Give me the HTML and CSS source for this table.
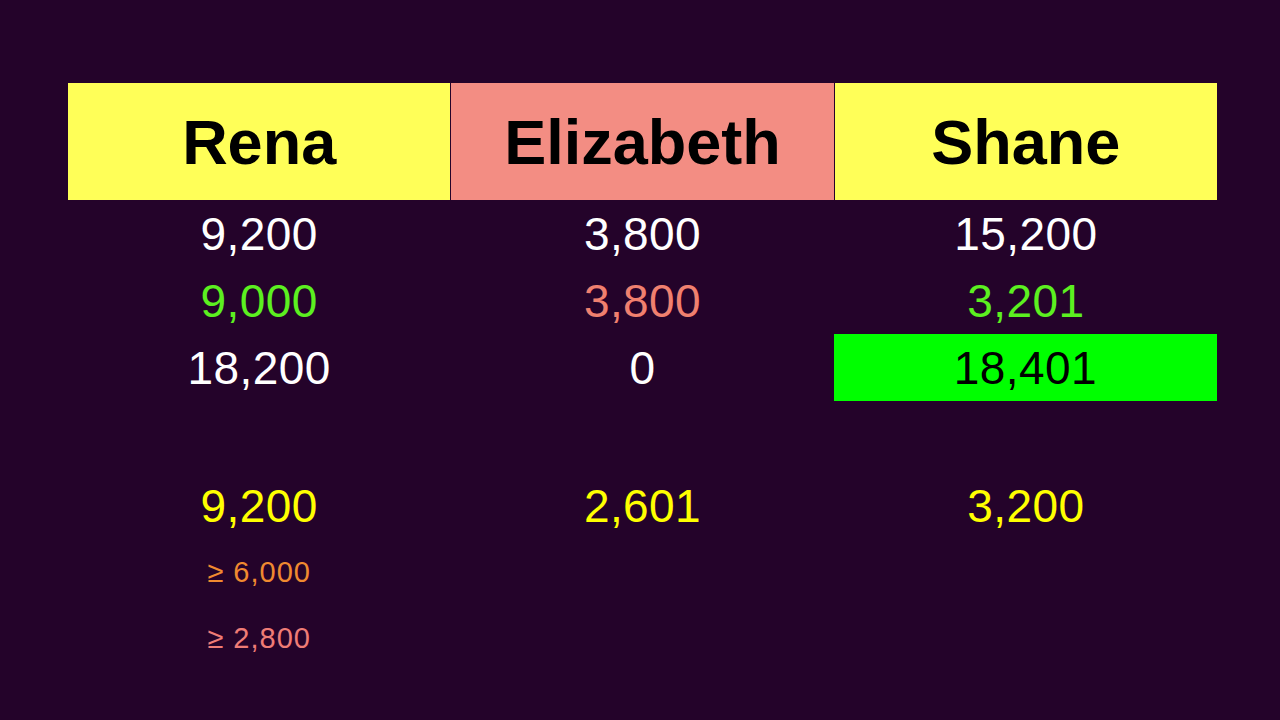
FILE: index.html
```html
<!DOCTYPE html>
<html lang="en">
<head>
<meta charset="utf-8">
<title>Scores</title>
<link rel="stylesheet" href="styles.css">
</head>
<body>
<main class="board">
  <div class="row header">
    <div class="name yellow">Rena</div>
    <div class="name salmon">Elizabeth</div>
    <div class="name yellow">Shane</div>
  </div>
  <div class="row big">
    <div class="cell white">9,200</div>
    <div class="cell white">3,800</div>
    <div class="cell white">15,200</div>
  </div>
  <div class="row big">
    <div class="cell green">9,000</div>
    <div class="cell red">3,800</div>
    <div class="cell green">3,201</div>
  </div>
  <div class="row big">
    <div class="cell white">18,200</div>
    <div class="cell white">0</div>
    <div class="cell winner">18,401</div>
  </div>
  <div class="spacer"></div>
  <div class="row big">
    <div class="cell yellowtext">9,200</div>
    <div class="cell yellowtext">2,601</div>
    <div class="cell yellowtext">3,200</div>
  </div>
  <div class="row small">
    <div class="cell orange">≥ 6,000</div>
    <div class="cell"></div>
    <div class="cell"></div>
  </div>
  <div class="row small">
    <div class="cell pink">≥ 2,800</div>
    <div class="cell"></div>
    <div class="cell"></div>
  </div>
</main>
</body>
</html>
```
FILE: styles.css
```css
html, body {
  margin: 0;
  padding: 0;
  background: #24032a;
  width: 1280px;
  height: 720px;
  overflow: hidden;
}

body {
  font-family: "Liberation Sans", Arial, sans-serif;
}

.board {
  margin: 83px 0 0 68px;
  width: 1149px;
  display: flex;
  flex-direction: column;
}

.row {
  display: grid;
  grid-template-columns: repeat(3, 1fr);
  column-gap: 1px;
}

.header {
  height: 117px;
}

.name {
  display: flex;
  align-items: center;
  justify-content: center;
  font-weight: bold;
  font-size: 63px;
  color: #000;
}

.yellow { background: #ffff58; }
.salmon { background: #f38d83; }

.cell {
  display: flex;
  align-items: center;
  justify-content: center;
}

.big {
  height: 67px;
}
.big .cell {
  font-size: 46px;
  letter-spacing: 0.4px;
}

.small {
  height: 66px;
}
.small .cell {
  font-size: 29px;
  letter-spacing: 1px;
  padding-top: 1px;
}

.spacer {
  height: 71px;
}

.white { color: #ffffff; }
.green { color: #5cf020; }
.red { color: #f0806f; }
.yellowtext { color: #ffff00; }
.orange { color: #f08a30; }
.pink { color: #ef7c76; }

.winner {
  background: #00ff00;
  color: #000;
  margin-left: -1px;
}
```
